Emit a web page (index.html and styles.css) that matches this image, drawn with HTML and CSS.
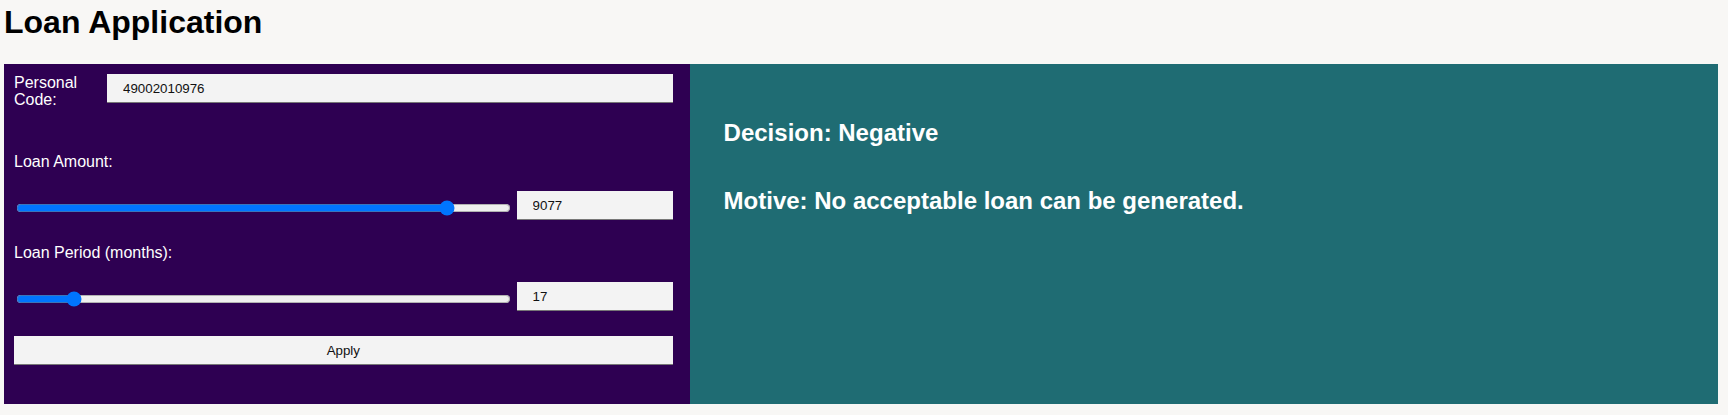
FILE: index.html
```html
<!DOCTYPE html>
<html lang="en">
<head>
<meta charset="utf-8">
<title>Loan Application</title>
<link rel="stylesheet" href="styles.css">
</head>
<body>
<h1 class="page-title">Loan Application</h1>
<main class="app">
  <section class="form-panel">
    <form class="loan-form">
      <div class="field-inline">
        <label class="inline-label" for="code">Personal Code:</label>
        <input class="text-input" id="code" type="text" value="49002010976">
      </div>
      <div class="field">
        <label class="field-label" for="amount">Loan Amount:</label>
        <div class="slider-row">
          <input class="range" id="amount" type="range" min="2000" max="10000" value="9077">
          <input class="text-input number-input" type="text" value="9077">
        </div>
      </div>
      <div class="field field-last">
        <label class="field-label" for="period">Loan Period (months):</label>
        <div class="slider-row">
          <input class="range" id="period" type="range" min="12" max="60" value="17">
          <input class="text-input number-input" type="text" value="17">
        </div>
      </div>
      <button class="apply-btn" type="button">Apply</button>
    </form>
  </section>
  <section class="result-panel">
    <h2 class="result-line">Decision: Negative</h2>
    <h2 class="result-line">Motive: No acceptable loan can be generated.</h2>
  </section>
</main>
</body>
</html>
```
FILE: styles.css
```css
html, body {
  background: #f8f7f5;
}
body {
  margin: 0 10px 0 4px;
  font-family: "Liberation Sans", Arial, sans-serif;
  font-size: 16px;
  color: #000;
}
.page-title {
  margin: 4px 0 23px 0;
  font-size: 32px;
  font-weight: bold;
}
.app {
  display: flex;
  height: 340px;
}
.form-panel {
  flex: 0 0 40%;
  box-sizing: border-box;
  background: #2e0052;
  padding: 10px 17px 0 10px;
  color: #fff;
}
.result-panel {
  flex: 1;
  box-sizing: border-box;
  background: #1f6c73;
  padding: 35px 32px 35px 34px;
  display: flex;
  flex-direction: column;
  color: #fff;
}
.result-line {
  margin: 20px 0;
  font-size: 24px;
  font-weight: bold;
}
.field-inline {
  display: flex;
  align-items: flex-start;
  margin-bottom: 45px;
}
.inline-label {
  flex: 0 0 93px;
  line-height: 17px;
}
.field {
  margin-bottom: 24px;
}
.field-last {
  margin-bottom: 25px;
}
.field-label {
  display: block;
  margin-bottom: 20px;
}
.slider-row {
  display: flex;
  align-items: center;
  gap: 4px;
}
.range {
  flex: 1 1 0;
  min-width: 0;
  margin: 4px 2px 0 2px;
}
.text-input {
  flex: 1 1 0;
  min-width: 0;
  box-sizing: border-box;
  height: 29px;
  padding: 0 16px;
  border: 0;
  border-bottom: 1px solid #777;
  background: #f3f3f3;
  font-family: "Liberation Sans", Arial, sans-serif;
  font-size: 13.333px;
  color: #111;
  outline: none;
}
.number-input {
  flex: 0 0 156px;
  width: 156px;
}
.apply-btn {
  display: block;
  width: 100%;
  height: 29px;
  border: 0;
  border-bottom: 1px solid #777;
  background: #f3f3f3;
  font-family: "Liberation Sans", Arial, sans-serif;
  font-size: 13.333px;
  color: #111;
}
```
